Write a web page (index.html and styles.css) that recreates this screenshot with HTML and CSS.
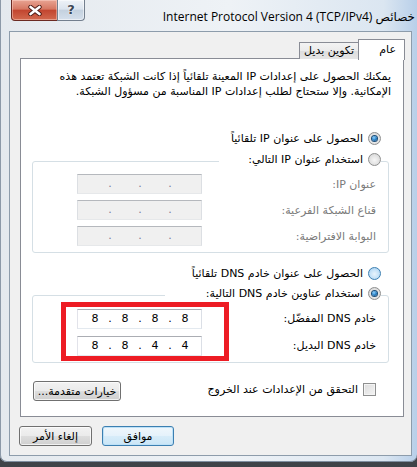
FILE: index.html
```html
<!DOCTYPE html>
<html lang="ar">
  <head>
    <meta charset="UTF-8" />
    <meta name="viewport" content="width=device-width, initial-scale=1.0" />
    <title>خصائص Internet Protocol Version 4 (TCP/IPv4)</title>
    <link rel="stylesheet" href="styles.css">
  </head>
  <body>
    <div class="window">
      <div class="titlebar">
        <div class="caption-buttons">
          <span class="btn-close">
            <svg width="14" height="11" viewBox="0 0 14 11">
              <path d="M2.5 2 L11.5 9 M11.5 2 L2.5 9" stroke="#4a1a14" stroke-width="4.4" stroke-linecap="round" />
              <path d="M2.5 2 L11.5 9 M11.5 2 L2.5 9" stroke="#ffffff" stroke-width="2.6" stroke-linecap="round" />
            </svg>
          </span>
          <span class="btn-help">?</span>
        </div>
        <div class="title" dir="rtl">خصائص Internet Protocol Version 4 (TCP/IPv4)</div>
      </div>

      <div class="client" dir="rtl">
        <div class="tabs">
          <span class="tab active">عام</span>
          <span class="tab">تكوين بديل</span>
        </div>

        <div class="panel">
          <p class="intro">يمكنك الحصول على إعدادات IP المعينة تلقائياً إذا كانت الشبكة تعتمد هذه<br>الإمكانية. وإلا ستحتاج لطلب إعدادات IP المناسبة من مسؤول الشبكة.</p>

          <label class="option first"><span class="radio on"></span>الحصول على عنوان IP تلقائياً</label>

          <fieldset class="group ip-group">
            <legend class="option"><span class="radio"></span>استخدام عنوان IP التالي:</legend>
            <div class="field disabled">
              <span>عنوان IP:</span>
              <div class="ipbox"><i></i><b>.</b><i></i><b>.</b><i></i><b>.</b><i></i></div>
            </div>
            <div class="field disabled">
              <span>قناع الشبكة الفرعية:</span>
              <div class="ipbox"><i></i><b>.</b><i></i><b>.</b><i></i><b>.</b><i></i></div>
            </div>
            <div class="field disabled">
              <span>البوابة الافتراضية:</span>
              <div class="ipbox"><i></i><b>.</b><i></i><b>.</b><i></i><b>.</b><i></i></div>
            </div>
          </fieldset>

          <label class="option second"><span class="radio hover"></span>الحصول على عنوان خادم DNS تلقائياً</label>

          <fieldset class="group dns-group">
            <legend class="option"><span class="radio on"></span>استخدام عناوين خادم DNS التالية:</legend>
            <div class="field tall">
              <span>خادم DNS المفضّل:</span>
              <div class="ipbox"><i>8</i><b>.</b><i>8</i><b>.</b><i>8</i><b>.</b><i>8</i></div>
            </div>
            <div class="field tall">
              <span>خادم DNS البديل:</span>
              <div class="ipbox"><i>8</i><b>.</b><i>8</i><b>.</b><i>4</i><b>.</b><i>4</i></div>
            </div>
          </fieldset>

          <div class="panel-footer">
            <label class="check"><span class="checkbox"></span>التحقق من الإعدادات عند الخروج</label>
            <button class="btn advanced">خيارات متقدمة...</button>
          </div>
        </div>

        <div class="footer">
          <button class="btn default">موافق</button>
          <button class="btn">إلغاء الأمر</button>
        </div>
      </div>
    </div>

    <div class="highlight"></div>
  </body>
</html>
```

FILE: styles.css
```css
* {
  margin: 0;
  padding: 0;
  box-sizing: border-box;
}
body {
  width: 417px;
  height: 467px;
  overflow: hidden;
  position: relative;
  background: linear-gradient(#6b6f75, #3f4348);
  font-family: "DejaVu Sans", Tahoma, sans-serif;
  font-size: 11px;
  color: #000;
}
.window {
  height: 462px;
  padding: 0 5px 6px 9px;
  display: flex;
  flex-direction: column;
  background: linear-gradient(to right, #e4e9ee, #eef2f6 55%, #dbe6f1 92%, #b8cfe9);
  border-radius: 0 0 7px 7px;
  box-shadow: inset 0 -1px 0 #7f8ea0, inset 1px 0 0 #8c99a8;
}
.titlebar {
  height: 31px;
  display: flex;
  align-items: flex-start;
}
.caption-buttons {
  display: flex;
  margin-left: 2px;
}
.btn-close {
  width: 47px;
  height: 21px;
  display: flex;
  align-items: center;
  justify-content: center;
  border: 1px solid #6b2a22;
  border-top: 0;
  border-radius: 0 0 0 4px;
  background: linear-gradient(#e8a493, #d67863 45%, #c24630 52%, #d2694e);
  box-shadow: inset 0 0 0 1px rgba(255, 220, 210, 0.45);
}
.btn-help {
  width: 28px;
  height: 21px;
  margin-left: -1px;
  border: 1px solid #737f8e;
  border-top: 0;
  border-radius: 0 0 4px 0;
  background: linear-gradient(#eef2f7, #dbe4ee 45%, #c4d1df 52%, #d5e0ec);
  box-shadow: inset 0 0 0 1px rgba(255, 255, 255, 0.5);
  font-family: "DejaVu Sans", sans-serif;
  font-weight: bold;
  font-size: 13px;
  line-height: 19px;
  text-align: center;
  color: #3c4654;
  text-shadow: 0 0 2px #fff, 0 0 1px #fff;
}
.title {
  margin-left: auto;
  margin-right: -3px;
  margin-top: 9px;
  font-family: "Open Sans", "DejaVu Sans", sans-serif;
  font-size: 12px;
  line-height: 16px;
  white-space: nowrap;
  color: #000;
}
.client {
  flex: 1;
  background: #f0f0f0;
  border: 1px solid #8d9cab;
  padding: 7px 7px 0 10px;
}
.tabs {
  height: 20px;
  display: flex;
  align-items: flex-end;
  position: relative;
  z-index: 1;
}
.tab {
  height: 17px;
  padding: 0 4px;
  line-height: 16px;
  border: 1px solid #898c95;
  border-bottom: 0;
  border-right: 0;
  background: linear-gradient(#f3f3f3, #ebebeb 50%, #dedede 51%, #e5e5e5);
  white-space: nowrap;
}
.tab.active {
  width: 47px;
  height: 21px;
  margin-right: -1px;
  margin-bottom: -1px;
  padding: 0 8px;
  line-height: 20px;
  border-right: 1px solid #898c95;
  background: #fff;
}
.panel {
  height: 359px;
  margin-top: -1px;
  background: #fff;
  border: 1px solid #898c95;
  display: flex;
  flex-direction: column;
}
.intro {
  margin: 10px 12px 0 12px;
  line-height: 15px;
  white-space: nowrap;
}
.option {
  height: 15px;
  display: flex;
  align-items: center;
  gap: 5px;
  white-space: nowrap;
}
.option.first {
  margin: 32px 22px 0 0;
}
.option.second {
  margin: 13px 22px 0 0;
}
.radio {
  width: 13px;
  height: 13px;
  flex: none;
  border-radius: 50%;
  border: 1px solid #8e8f8f;
  background: radial-gradient(circle at 50% 55%, #f6f6f6 0, #e6e6e6 45%, #cfcfcf 100%);
  display: flex;
  align-items: center;
  justify-content: center;
}
.radio.hover {
  border-color: #3c7fb1;
  background: radial-gradient(circle at 50% 55%, #e9f4fc 0, #c7e3f8 50%, #9cc9ee 100%);
}
.radio.on::after {
  content: "";
  width: 5px;
  height: 5px;
  border-radius: 50%;
  background: radial-gradient(circle at 40% 35%, #8fd2ff 0, #2a83c8 50%, #0b3f73 100%);
  box-shadow: 0 0 0 1px #1d4e78;
}
.group {
  margin: 6px 14px 0 11px;
  padding: 0 7px 3px 7px;
  border: 1px solid #d5dfe5;
  border-radius: 3px;
}
.group.dns-group {
  margin-top: 5px;
}
.group legend {
  padding-bottom: 4px;
  height: 19px;
  background: #fff;
}
.ip-group legend {
  padding-left: 29px;
}
.dns-group legend {
  padding-left: 41px;
}
.field {
  height: 26px;
  padding: 0 5px 0 37px;
  display: flex;
  align-items: center;
  justify-content: space-between;
  white-space: nowrap;
}
.field.tall {
  height: 27px;
}
.field.disabled span {
  color: #7a7a7a;
}
.ipbox {
  width: 125px;
  height: 20px;
  padding-left: 7px;
  display: flex;
  direction: ltr;
  background: #fff;
  border: 1px solid;
  border-color: #abadb3 #dbdfe6 #e3e9ef #e2e3ea;
  line-height: 18px;
}
.field.disabled .ipbox {
  background: #f0f0f0;
  border-color: #b5b8bd #dcdfe3 #e6e8ea #dcdfe3;
  color: #7a7a9a;
}
.ipbox i,
.ipbox b {
  font-style: normal;
  font-weight: normal;
  text-align: center;
}
.ipbox i {
  width: 20px;
}
.ipbox b {
  width: 10px;
}
.panel-footer {
  margin: 18px 27px 0 12px;
  height: 20px;
  display: flex;
  align-items: center;
  justify-content: space-between;
}
.check {
  margin-bottom: 4px;
  display: flex;
  align-items: center;
  gap: 5px;
  white-space: nowrap;
}
.checkbox {
  width: 13px;
  height: 13px;
  border: 1px solid #8e8f8f;
  background: linear-gradient(135deg, #dcdcdc, #f4f4f4);
  box-shadow: inset 0 0 0 1px #f4f4f4;
}
.btn {
  height: 20px;
  width: 73px;
  font-family: "DejaVu Sans", Tahoma, sans-serif;
  font-size: 11px;
  color: #000;
  border: 1px solid #707070;
  border-radius: 3px;
  background: linear-gradient(#f2f2f2, #ebebeb 48%, #dddddd 52%, #cfcfcf);
  box-shadow: inset 0 0 0 1px rgba(255, 255, 255, 0.7);
}
.btn.advanced {
  width: 88px;
}
.btn.default {
  width: 72px;
  border-color: #3c7fb1;
  background: linear-gradient(#f0f7fc, #e5f2fb 48%, #d7ecf9 52%, #cae5f6);
  box-shadow: inset 0 0 0 1px #bde1f7;
}
.footer {
  margin-top: 9px;
  margin-left: -1px;
  display: flex;
  justify-content: flex-end;
  gap: 10px;
}
.highlight {
  position: absolute;
  left: 61px;
  top: 302px;
  width: 168px;
  height: 59px;
  border: 5px solid #ed1c24;
}
```
